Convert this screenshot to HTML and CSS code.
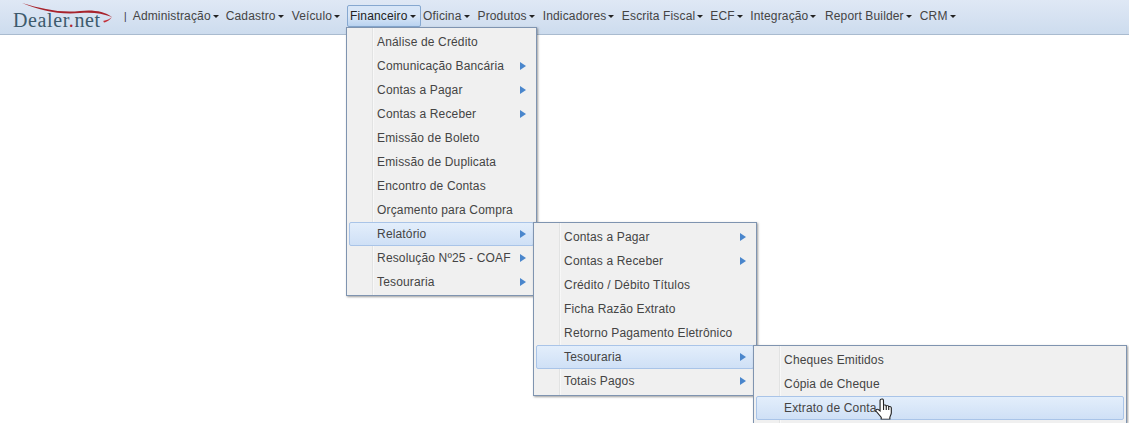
FILE: index.html
```html
<!DOCTYPE html>
<html lang="pt-BR">
<head>
    <meta charset="UTF-8">
    <title>Dealer.net</title>
    <link rel="stylesheet" href="styles.css">
</head>
<body>
    <header class="topbar">
        <a class="logo">
            <svg class="swoosh" width="104" height="30" viewBox="0 0 104 30">
                <path d="M10 2 C30 8 48 12 68 10 C80 8.500 92 10 100 16 C90 12 80 11 68 12 C46 14 28 9 10 2 Z" fill="#a8232c"/>
                <path d="M91 20 C95 19 98 18 100 16 C98 19 95 21 91 22 C93 21.500 92 21 91 20 Z" fill="#c2303a"/>
            </svg>
            <span class="logo-text">Dealer<b>.</b>net</span>
        </a>
        <span class="sep">|</span>
        <nav class="nav">
            <div class="nav-item adm">Administração<i class="caret"></i></div>
            <div class="nav-item cad">Cadastro<i class="caret"></i></div>
            <div class="nav-item vei">Veículo<i class="caret"></i></div>
            <div class="nav-item active">Financeiro<i class="caret"></i>
                <ul class="menu menu-fin">
                    <li>Análise de Crédito</li>
                    <li class="sub">Comunicação Bancária</li>
                    <li class="sub">Contas a Pagar</li>
                    <li class="sub">Contas a Receber</li>
                    <li>Emissão de Boleto</li>
                    <li>Emissão de Duplicata</li>
                    <li>Encontro de Contas</li>
                    <li>Orçamento para Compra</li>
                    <li class="sub hover">Relatório
                        <ul class="menu menu-rel">
                            <li class="sub">Contas a Pagar</li>
                            <li class="sub">Contas a Receber</li>
                            <li>Crédito / Débito Títulos</li>
                            <li>Ficha Razão Extrato</li>
                            <li>Retorno Pagamento Eletrônico</li>
                            <li class="sub hover">Tesouraria
                                <ul class="menu menu-tes">
                                    <li>Cheques Emitidos</li>
                                    <li>Cópia de Cheque</li>
                                    <li class="hover">Extrato de Conta
                                        <svg class="hand" width="18" height="22" viewBox="0 0 16 24" preserveAspectRatio="none">
                                            <path d="M5 1.500 C6 .6 7.400 1 7.500 2.500 L7.600 8 C8.500 7.200 9.700 7.500 10 8.500 C10.900 8 12 8.400 12.200 9.400 C13.200 9 14.500 9.600 14.500 11 L14.500 16 C14.500 18 13.500 19.500 13.200 21 L13.200 23 L5.500 23 L5.500 21 C4 19 2.500 16.500 1 14.500 C.2 13.200 1.600 11.600 3 12.600 L4.500 14 L4.500 2.500 Z" fill="#fff" stroke="#222" stroke-width="1"/>
                                            <path d="M7.600 8 V13 M10 8.500 V13 M12.200 9.400 V13" stroke="#222" stroke-width="1" fill="none"/>
                                        </svg>
                                    </li>
                                </ul>
                            </li>
                            <li class="sub">Totais Pagos</li>
                        </ul>
                    </li>
                    <li class="sub">Resolução Nº25 - COAF</li>
                    <li class="sub">Tesouraria</li>
                </ul>
            </div>
            <div class="nav-item ofi">Oficina<i class="caret"></i></div>
            <div class="nav-item pro">Produtos<i class="caret"></i></div>
            <div class="nav-item ind">Indicadores<i class="caret"></i></div>
            <div class="nav-item esc">Escrita Fiscal<i class="caret"></i></div>
            <div class="nav-item ecf">ECF<i class="caret"></i></div>
            <div class="nav-item int">Integração<i class="caret"></i></div>
            <div class="nav-item rep">Report Builder<i class="caret"></i></div>
            <div class="nav-item crm">CRM<i class="caret"></i></div>
        </nav>
    </header>
</body>
</html>
```

FILE: styles.css
```css
* {
    margin: 0;
    padding: 0;
    box-sizing: border-box;
}

html, body {
    height: 423px;
    overflow: hidden;
}

body {
    font-family: "Liberation Sans", Arial, sans-serif;
    font-size: 12px;
    letter-spacing: .15px;
    color: #333;
    background: #fff;
}

.topbar {
    display: flex;
    align-items: flex-start;
    height: 35px;
    background: linear-gradient(#dfe8f5, #cddcee);
    border-bottom: 1px solid #a9bbcf;
}

.logo {
    position: relative;
    width: 124px;
    height: 34px;
    padding: 8px 0 0 13px;
    flex: none;
}

.swoosh {
    position: absolute;
    top: 1px;
    left: 12px;
}

.logo-text {
    font-family: "Liberation Serif", serif;
    font-size: 20px;
    line-height: 24px;
    letter-spacing: .6px;
    color: #3d5a6c;
}

.logo-text b {
    font-weight: normal;
    color: #b0262e;
}

.sep {
    margin-top: 11px;
    font-size: 10px;
    line-height: 12px;
}

.nav {
    display: flex;
    margin-left: 3px;
}

.nav-item {
    position: relative;
    height: 22px;
    margin-top: 5px;
    padding: 2px 2px 0 2px;
    line-height: 16px;
    white-space: nowrap;
    color: #444;
    border: 1px solid transparent;
    border-radius: 2px;
}

.nav-item.adm { margin-right: 1px; }
.nav-item.cad { margin-right: 2px; }
.nav-item.vei { margin-right: 4px; }
.nav-item.ofi { margin-right: 2px; }
.nav-item.pro { margin-right: 2px; }
.nav-item.ind { margin-right: 1.4px; }
.nav-item.esc { margin-right: 1px; }
.nav-item.ecf { margin-right: 1.5px; }
.nav-item.int { margin-right: 2.5px; }
.nav-item.rep { margin-right: 2px; }

.nav-item.active {
    margin-right: -.5px;
    padding-right: 4px;
    color: #222;
    background: linear-gradient(#d8e6f7 50%, #bad3f0);
    border-color: #86a8d0;
}

.caret {
    display: inline-block;
    margin-left: 2px;
    vertical-align: 2px;
    border-top: 3px solid #222;
    border-left: 3px solid transparent;
    border-right: 3px solid transparent;
}

.menu {
    position: absolute;
    list-style: none;
    padding: 2px;
    color: #444;
    background: linear-gradient(to right, #f0f0f0 25px, #e2e3e3 25px, #e2e3e3 26px, #fff 26px, #f0f0f0 27px);
    border: 1px solid #7f94b0;
    box-shadow: 1px 1px 2px rgba(60, 60, 60, .5);
}

.menu li {
    position: relative;
    height: 24px;
    padding-left: 27px;
    line-height: 22px;
    border: 1px solid transparent;
    border-radius: 2px;
}

.menu li.sub::after {
    content: "";
    position: absolute;
    top: 7px;
    right: 7px;
    border-left: 6px solid #4a86cc;
    border-top: 4.5px solid transparent;
    border-bottom: 4.5px solid transparent;
}

.menu li.hover {
    background: linear-gradient(#e3eefb, #cfe0f6);
    border-color: #a9c4e8;
}

.menu-fin {
    top: 21px;
    left: -2px;
    width: 191px;
    height: 269px;
}

.menu-rel {
    top: -1px;
    left: 183px;
    width: 224px;
    height: 174px;
}

/* cut by the bottom of the window */
.menu-tes {
    top: -1px;
    left: 216px;
    width: 374px;
    height: 78px;
    padding-bottom: 0;
    border-bottom: 0;
}

.hand {
    position: absolute;
    top: 1px;
    left: 118px;
}
```
